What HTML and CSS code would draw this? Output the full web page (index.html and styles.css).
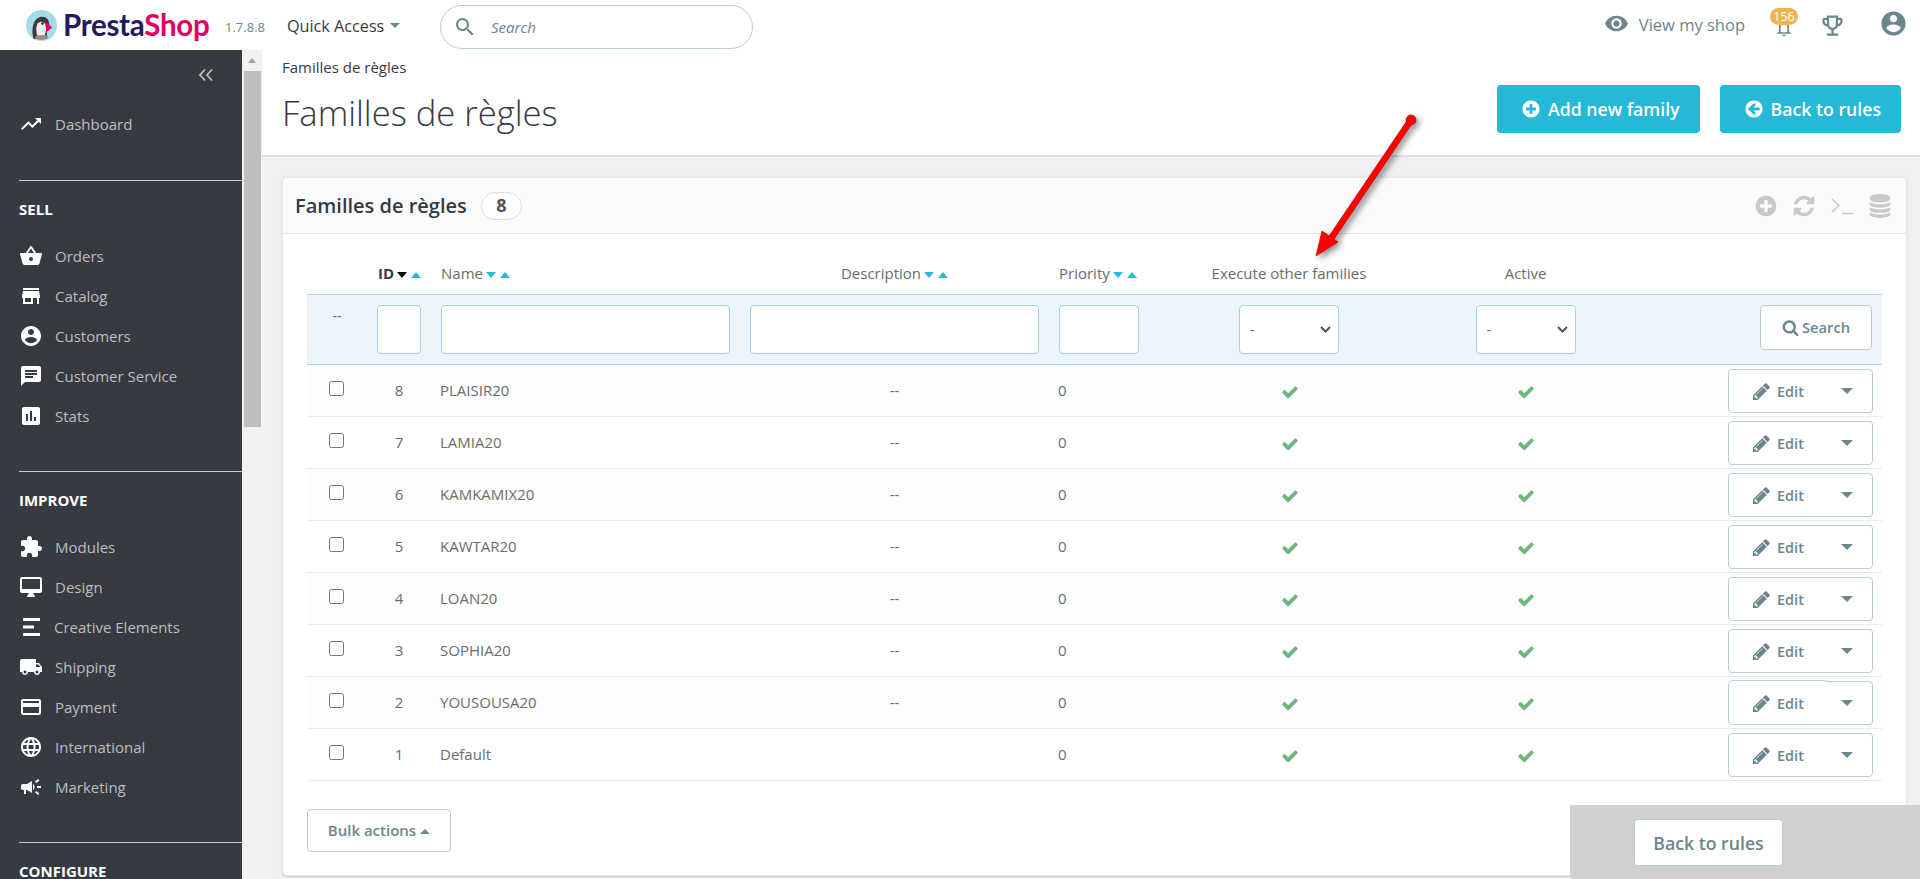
FILE: index.html
```html
<!DOCTYPE html>
<html lang="en">
<head>
<meta charset="utf-8">
<title>Familles de règles</title>
<link rel="stylesheet" href="styles.css">
</head>
<body>
<svg class="sprite" aria-hidden="true">
  <symbol id="i-trend" viewBox="0 0 24 24"><path d="M16 6l2.29 2.29-4.88 4.88-4-4L2 16.59 3.41 18l6-6 4 4 6.3-6.29L22 12V6z"/></symbol>
  <symbol id="i-basket" viewBox="0 0 24 24"><path d="M17.21 9l-4.38-6.56c-.19-.28-.51-.42-.83-.42-.32 0-.64.14-.83.43L6.79 9H2c-.55 0-1 .45-1 1 0 .09.01.18.04.27l2.54 9.27c.23.84 1 1.46 1.92 1.46h13c.92 0 1.69-.62 1.93-1.46l2.54-9.27L23 10c0-.55-.45-1-1-1h-4.79zM9 9l3-4.400L15 9H9zm3 8c-1.100 0-2-.9-2-2s.9-2 2-2 2 .9 2 2-.9 2-2 2z"/></symbol>
  <symbol id="i-store" viewBox="0 0 24 24"><path d="M20 4H4v2h16V4zm1 10v-2l-1-5H4l-1 5v2h1v6h10v-6h4v6h2v-6h1zm-9 4H6v-4h6v4z"/></symbol>
  <symbol id="i-account" viewBox="0 0 24 24"><path d="M12 2C6.48 2 2 6.48 2 12s4.48 10 10 10 10-4.48 10-10S17.52 2 12 2zm0 3c1.66 0 3 1.34 3 3s-1.34 3-3 3-3-1.34-3-3 1.34-3 3-3zm0 14.2c-2.5 0-4.71-1.28-6-3.22.03-1.99 4-3.08 6-3.08 1.99 0 5.97 1.09 6 3.08-1.29 1.94-3.5 3.22-6 3.22z"/></symbol>
  <symbol id="i-chat" viewBox="0 0 24 24"><path d="M20 2H4c-1.100 0-1.990.9-1.990 2L2 22l4-4h14c1.100 0 2-.9 2-2V4c0-1.100-.9-2-2-2zM6 9h12v2H6V9zm8 5H6v-2h8v2zm4-6H6V6h12v2z"/></symbol>
  <symbol id="i-stats" viewBox="0 0 24 24"><path d="M19 3H5c-1.100 0-2 .9-2 2v14c0 1.100.9 2 2 2h14c1.100 0 2-.9 2-2V5c0-1.100-.9-2-2-2zM9 17H7v-7h2v7zm4 0h-2V7h2v10zm4 0h-2v-4h2v4z"/></symbol>
  <symbol id="i-puzzle" viewBox="0 0 24 24"><path d="M20.500 11H19V7c0-1.100-.9-2-2-2h-4V3.500C13 2.120 11.880 1 10.500 1S8 2.120 8 3.500V5H4c-1.100 0-1.990.9-1.990 2v3.800H3.500c1.490 0 2.700 1.210 2.700 2.700s-1.210 2.700-2.700 2.700H2V20c0 1.100.9 2 2 2h3.800v-1.500c0-1.490 1.210-2.700 2.700-2.700 1.490 0 2.700 1.210 2.700 2.700V22H17c1.100 0 2-.9 2-2v-4h1.500c1.380 0 2.500-1.120 2.500-2.500S21.880 11 20.500 11z"/></symbol>
  <symbol id="i-desktop" viewBox="0 0 24 24"><path d="M21 2H3c-1.100 0-2 .9-2 2v12c0 1.100.9 2 2 2h7l-2 3v1h8v-1l-2-3h7c1.100 0 2-.9 2-2V4c0-1.100-.9-2-2-2zm0 12H3V4h18v10z"/></symbol>
  <symbol id="i-elements" viewBox="0 0 24 24"><path d="M4 3h17v3H4zM4 10.500h11v3H4zM4 18h17v3H4z"/></symbol>
  <symbol id="i-truck" viewBox="0 0 24 24"><path d="M20 8h-3V4H3c-1.100 0-2 .9-2 2v11h2c0 1.660 1.340 3 3 3s3-1.340 3-3h6c0 1.660 1.340 3 3 3s3-1.340 3-3h2v-5l-3-4zM6 18.500c-.83 0-1.500-.67-1.500-1.500s.67-1.500 1.500-1.500 1.500.67 1.500 1.500-.67 1.500-1.500 1.500zm13.500-9l1.960 2.500H17V9.500h2.500zm-1.500 9c-.83 0-1.500-.67-1.500-1.500s.67-1.500 1.500-1.500 1.500.67 1.500 1.500-.67 1.500-1.500 1.500z"/></symbol>
  <symbol id="i-card" viewBox="0 0 24 24"><path d="M20 4H4c-1.110 0-1.990.89-1.990 2L2 18c0 1.110.89 2 2 2h16c1.110 0 2-.89 2-2V6c0-1.110-.89-2-2-2zm0 14H4v-6h16v6zm0-10H4V6h16v2z"/></symbol>
  <symbol id="i-globe" viewBox="0 0 24 24"><path d="M11.990 2C6.470 2 2 6.480 2 12s4.470 10 9.990 10C17.520 22 22 17.520 22 12S17.520 2 11.990 2zm6.930 6h-2.950c-.32-1.250-.78-2.450-1.380-3.560 1.840.63 3.370 1.910 4.330 3.560zM12 4.040c.83 1.200 1.480 2.530 1.910 3.960h-3.820c.43-1.430 1.080-2.760 1.910-3.960zM4.260 14C4.100 13.360 4 12.690 4 12s.1-1.360.26-2h3.380c-.08.66-.14 1.320-.14 2 0 .68.06 1.340.14 2H4.260zm.82 2h2.950c.32 1.250.78 2.450 1.380 3.560-1.840-.63-3.370-1.900-4.330-3.560zm2.950-8H5.080c.96-1.660 2.490-2.930 4.330-3.560C8.810 5.550 8.350 6.750 8.030 8zM12 19.960c-.83-1.200-1.480-2.530-1.910-3.960h3.820c-.43 1.430-1.080 2.760-1.910 3.960zM14.340 14H9.660c-.09-.66-.16-1.320-.16-2 0-.68.07-1.350.16-2h4.680c.09.65.16 1.320.16 2 0 .68-.07 1.340-.16 2zm.25 5.560c.6-1.110 1.060-2.310 1.380-3.560h2.950c-.96 1.650-2.490 2.930-4.330 3.560zM16.360 14c.08-.66.14-1.320.14-2 0-.68-.06-1.340-.14-2h3.380c.16.64.26 1.310.26 2s-.1 1.360-.26 2h-3.380z"/></symbol>
  <symbol id="i-mega" viewBox="0 0 24 24"><path d="M18 11v2h4v-2h-4zm-2 6.610c.96.71 2.210 1.650 3.200 2.390.4-.53.8-1.070 1.200-1.600-.99-.74-2.240-1.680-3.200-2.400-.4.54-.8 1.080-1.200 1.610zM20.400 5.600c-.4-.53-.8-1.070-1.200-1.600-.99.74-2.240 1.680-3.200 2.400.4.53.8 1.070 1.200 1.600.96-.72 2.210-1.650 3.200-2.400zM4 9c-1.100 0-2 .9-2 2v2c0 1.100.9 2 2 2h1v4h2v-4h1l5 3V6L8 9H4zm11.500 3c0-1.330-.58-2.530-1.500-3.350v6.690c.92-.81 1.500-2.010 1.500-3.340z"/></symbol>
  <symbol id="i-eye" viewBox="0 0 24 24"><path d="M12 4.500C7 4.500 2.730 7.610 1 12c1.730 4.390 6 7.500 11 7.500s9.270-3.110 11-7.500c-1.730-4.390-6-7.500-11-7.500zM12 17c-2.760 0-5-2.240-5-5s2.240-5 5-5 5 2.240 5 5-2.240 5-5 5zm0-8c-1.660 0-3 1.340-3 3s1.340 3 3 3 3-1.340 3-3-1.340-3-3-3z"/></symbol>
  <symbol id="i-bell" viewBox="0 0 24 24"><path d="M12 22c1.100 0 2-.9 2-2h-4c0 1.100.9 2 2 2zm6-6v-5c0-3.070-1.630-5.640-4.500-6.320V4c0-.83-.67-1.500-1.500-1.500s-1.500.67-1.500 1.500v.68C7.640 5.360 6 7.920 6 11v5l-2 2v1h16v-1l-2-2zm-2 1H8v-6c0-2.480 1.510-4.500 4-4.500s4 2.020 4 4.500v6z"/></symbol>
  <symbol id="i-trophy" viewBox="0 0 24 24"><path d="M19 5h-2V3H7v2H5c-1.100 0-2 .9-2 2v1c0 2.550 1.920 4.630 4.390 4.940.63 1.500 1.980 2.630 3.610 2.960V19H7v2h10v-2h-4v-3.100c1.630-.33 2.980-1.460 3.610-2.960C19.080 12.630 21 10.550 21 8V7c0-1.100-.9-2-2-2zM5 8V7h2v3.820C5.840 10.400 5 9.300 5 8zm7 6c-1.650 0-3-1.350-3-3V5h6v6c0 1.650-1.350 3-3 3zm7-6c0 1.300-.84 2.400-2 2.820V7h2v1z"/></symbol>
  <symbol id="i-search" viewBox="0 0 24 24"><path d="M15.500 14h-.79l-.28-.27C15.410 12.590 16 11.110 16 9.500 16 5.910 13.090 3 9.500 3S3 5.910 3 9.500 5.910 16 9.500 16c1.610 0 3.090-.59 4.230-1.570l.27.28v.79l5 4.990L20.490 19l-4.990-5zm-6 0C7.010 14 5 11.990 5 9.500S7.010 5 9.500 5 14 7.010 14 9.500 11.990 14 9.500 14z"/></symbol>
  <symbol id="fa-search" viewBox="0 0 1792 1792"><path d="M1216 832q0-185-131.500-316.500t-316.500-131.500-316.500 131.500-131.500 316.500 131.500 316.500 316.500 131.500 316.500-131.500 131.500-316.500zm512 832q0 52-38 90t-90 38q-54 0-90-38l-343-342q-179 124-399 124-143 0-273.500-55.500t-225-150-150-225-55.500-273.500 55.500-273.500 150-225 225-150 273.500-55.500 273.500 55.500 225 150 150 225 55.500 273.500q0 220-124 399l343 343q37 37 37 90z"/></symbol>
  <symbol id="fa-plus" viewBox="0 0 1792 1792"><path d="M1344 960v-128q0-26-19-45t-45-19h-256v-256q0-26-19-45t-45-19h-128q-26 0-45 19t-19 45v256h-256q-26 0-45 19t-19 45v128q0 26 19 45t45 19h256v256q0 26 19 45t45 19h128q26 0 45-19t19-45v-256h256q26 0 45-19t19-45zm320-64q0 209-103 385.500t-279.500 279.500-385.500 103-385.500-103-279.500-279.500-103-385.500 103-385.500 279.500-279.500 385.500-103 385.500 103 279.500 279.500 103 385.500z"/></symbol>
  <symbol id="fa-left" viewBox="0 0 1792 1792"><path d="M1408 960v-128q0-26-18.500-45t-45.500-19h-502l189-189q19-19 19-45t-19-45l-91-91q-18-18-45-18t-45 18l-362 362-91 91q-18 18-18 45t18 45l91 91 362 362q18 18 45 18t45-18l91-91q18-18 18-45t-18-45l-189-189h502q27 0 45.500-19t18.500-45zm256-64q0 209-103 385.500t-279.500 279.500-385.500 103-385.500-103-279.500-279.500-103-385.500 103-385.500 279.500-279.500 385.500-103 385.500 103 279.500 279.500 103 385.500z"/></symbol>
  <symbol id="fa-refresh" viewBox="0 0 1792 1792"><path d="M1639 1056q0 5-1 7-64 268-268 434.500t-478 166.500q-146 0-282.500-55t-243.500-157l-129 129q-19 19-45 19t-45-19-19-45v-448q0-26 19-45t45-19h448q26 0 45 19t19 45-19 45l-137 137q71 66 161 102t187 36q134 0 250-65t186-179q11-17 53-117 8-23 30-23h192q13 0 22.500 9.500t9.500 22.500zm25-800v448q0 26-19 45t-45 19h-448q-26 0-45-19t-19-45 19-45l138-138q-148-137-349-137-134 0-250 65t-186 179q-11 17-53 117-8 23-30 23h-199q-13 0-22.500-9.500t-9.500-22.500v-7q65-268 270-434.500t480-166.500q146 0 284 55.500t245 156.500l130-129q19-19 45-19t45 19 19 45z"/></symbol>
  <symbol id="fa-db" viewBox="0 0 1792 1792"><path d="M896 768q237 0 443-43t325-127v170q0 69-103 128t-280 93.500-385 34.500-385-34.500-280-93.500-103-128v-170q119 84 325 127t443 43zm0 768q237 0 443-43t325-127v170q0 69-103 128t-280 93.500-385 34.500-385-34.500-280-93.500-103-128v-170q119 84 325 127t443 43zm0-384q237 0 443-43t325-127v170q0 69-103 128t-280 93.500-385 34.500-385-34.500-280-93.500-103-128v-170q119 84 325 127t443 43zm0-1152q208 0 385 34.500t280 93.500 103 128v128q0 69-103 128t-280 93.500-385 34.500-385-34.500-280-93.500-103-128v-128q0-69 103-128t280-93.500 385-34.500z"/></symbol>
  <symbol id="fa-check" viewBox="0 0 1792 1792"><path d="M1671 566q0 40-28 68l-724 724-136 136q-28 28-68 28t-68-28l-136-136-362-362q-28-28-28-68t28-68l136-136q28-28 68-28t68 28l294 295 656-657q28-28 68-28t68 28l136 136q28 28 28 68z"/></symbol>
  <symbol id="fa-pencil" viewBox="0 0 1536 1536"><path d="M363 1408l91-91-235-235-91 91v107h128v128h107zm523-928q0-22-22-22-10 0-17 7l-542 542q-7 7-7 17 0 22 22 22 10 0 17-7l542-542q7-7 7-17zm-54-192l416 416-832 832h-416v-416zm683 96q0 53-37 90l-166 166-416-416 166-165q36-38 90-38 53 0 91 38l235 234q37 39 37 91z"/></symbol>
</svg>

<header class="topbar">
  <div class="logo">
    <svg class="logo-mark" viewBox="0 0 32 32" aria-hidden="true">
      <circle cx="16" cy="16" r="16" fill="#a5dbe8"/>
      <path d="M8 30C5 21 7 9 15 7c6-1 9 3 9 8l-3 3 1 12z" fill="#3d3a3f"/>
      <path d="M12 14c3-3 7-2 8 1l1 5-2 7-6 2c-3-5-3-11-1-15z" fill="#f1eee9"/>
      <circle cx="17" cy="14" r="1.300" fill="#222"/>
      <path d="M20 11l7 7-6 5z" fill="#df0067"/>
      <path d="M9 29c3 2 9 3 14 0l-1-3H11z" fill="#9b8a76"/>
    </svg>
    <span class="logo-text"><span class="logo-presta">Presta</span><span class="logo-shop">Shop</span></span>
  </div>
  <span class="version">1.7.8.8</span>
  <span class="quick">Quick Access<span class="caret-down"></span></span>
  <label class="searchbox">
    <svg class="searchbox-icon"><use href="#i-search"/></svg>
    <span class="searchbox-text">Search</span>
  </label>
  <div class="top-right">
    <svg class="view-eye"><use href="#i-eye"/></svg>
    <span class="view-text">View my shop</span>
    <span class="bell">
      <svg class="bell-icon"><use href="#i-bell"/></svg>
      <span class="bell-badge">156</span>
    </span>
    <svg class="trophy"><use href="#i-trophy"/></svg>
    <svg class="user"><use href="#i-account"/></svg>
  </div>
</header>

<div class="shell">
  <nav class="sidebar">
    <div class="collapse">
      <svg class="collapse-icon" viewBox="0 0 16 14" aria-hidden="true"><path d="M7 1.500L2 7l5 5.500M14 1.500L9 7l5 5.500"/></svg>
    </div>
    <a class="nav-item"><svg class="nav-icon"><use href="#i-trend"/></svg>Dashboard</a>
    <section class="nav-section">
      <h3 class="nav-title">SELL</h3>
      <a class="nav-item"><svg class="nav-icon"><use href="#i-basket"/></svg>Orders</a>
      <a class="nav-item"><svg class="nav-icon"><use href="#i-store"/></svg>Catalog</a>
      <a class="nav-item"><svg class="nav-icon"><use href="#i-account"/></svg>Customers</a>
      <a class="nav-item"><svg class="nav-icon"><use href="#i-chat"/></svg>Customer Service</a>
      <a class="nav-item"><svg class="nav-icon"><use href="#i-stats"/></svg>Stats</a>
    </section>
    <section class="nav-section">
      <h3 class="nav-title">IMPROVE</h3>
      <a class="nav-item"><svg class="nav-icon"><use href="#i-puzzle"/></svg>Modules</a>
      <a class="nav-item"><svg class="nav-icon"><use href="#i-desktop"/></svg>Design</a>
      <a class="nav-item nav-item-tight"><svg class="nav-icon"><use href="#i-elements"/></svg>Creative Elements</a>
      <a class="nav-item"><svg class="nav-icon"><use href="#i-truck"/></svg>Shipping</a>
      <a class="nav-item"><svg class="nav-icon"><use href="#i-card"/></svg>Payment</a>
      <a class="nav-item"><svg class="nav-icon"><use href="#i-globe"/></svg>International</a>
      <a class="nav-item"><svg class="nav-icon"><use href="#i-mega"/></svg>Marketing</a>
    </section>
    <section class="nav-section">
      <h3 class="nav-title nav-title-last">CONFIGURE</h3>
    </section>
  </nav>
  <div class="scrollbar">
    <span class="scroll-arrow"></span>
    <span class="scroll-thumb"></span>
  </div>

  <main class="main">
    <div class="toolbar">
      <div class="toolbar-left">
        <div class="breadcrumb">Familles de règles</div>
        <h1 class="page-title">Familles de règles</h1>
      </div>
      <div class="toolbar-actions">
        <a class="btn-primary"><svg class="btn-icon"><use href="#fa-plus"/></svg>Add new family</a>
        <a class="btn-primary"><svg class="btn-icon"><use href="#fa-left"/></svg>Back to rules</a>
      </div>
    </div>

    <section class="card">
      <div class="card-head">
        <span class="card-title">Familles de règles</span>
        <span class="card-badge">8</span>
        <div class="card-tools">
          <svg class="tool"><use href="#fa-plus"/></svg>
          <svg class="tool"><use href="#fa-refresh"/></svg>
          <svg class="tool tool-term" viewBox="0 0 24 24" aria-hidden="true"><path d="M2 5l7 6.500L2 18M12 19.500h11"/></svg>
          <svg class="tool"><use href="#fa-db"/></svg>
        </div>
      </div>
      <div class="card-body">
        <table class="grid">
          <colgroup>
            <col class="c-check"><col class="c-id"><col class="c-name"><col class="c-desc"><col class="c-prio"><col class="c-exec"><col class="c-active"><col class="c-act">
          </colgroup>
          <thead>
            <tr class="head-row">
              <th></th>
              <th class="th-id"><b>ID</b><span class="sorts"><i class="s-down s-dark"></i><i class="s-up"></i></span></th>
              <th class="th-left">Name<span class="sorts"><i class="s-down"></i><i class="s-up"></i></span></th>
              <th>Description<span class="sorts"><i class="s-down"></i><i class="s-up"></i></span></th>
              <th class="th-left th-prio">Priority<span class="sorts"><i class="s-down"></i><i class="s-up"></i></span></th>
              <th>Execute other families</th>
              <th>Active</th>
              <th></th>
            </tr>
            <tr class="filter-row">
              <th class="filter-dash">--</th>
              <th class="f-cell"><input class="f-input" type="text" aria-label="ID"></th>
              <th class="f-cell"><input class="f-input" type="text" aria-label="Name"></th>
              <th class="f-cell"><input class="f-input" type="text" aria-label="Description"></th>
              <th class="f-cell"><input class="f-input" type="text" aria-label="Priority"></th>
              <th class="f-cell f-center"><select class="f-select" aria-label="Execute other families"><option>-</option></select></th>
              <th class="f-cell f-center"><select class="f-select" aria-label="Active"><option>-</option></select></th>
              <th class="f-cell f-right"><a class="btn-search"><svg class="btn-search-icon"><use href="#fa-search"/></svg>Search</a></th>
            </tr>
          </thead>
          <tbody>
            <tr class="row odd"><td class="td-check"><input type="checkbox" class="cb" aria-label="Select 8"></td><td class="td-id">8</td><td>PLAISIR20</td><td class="td-center">--</td><td class="td-prio">0</td><td class="td-center"><svg class="ok"><use href="#fa-check"/></svg></td><td class="td-center"><svg class="ok"><use href="#fa-check"/></svg></td><td class="td-act"><a class="btn-edit"><span class="edit-main"><svg class="edit-icon"><use href="#fa-pencil"/></svg>Edit</span><span class="caret-edit"></span></a></td></tr>
            <tr class="row"><td class="td-check"><input type="checkbox" class="cb" aria-label="Select 7"></td><td class="td-id">7</td><td>LAMIA20</td><td class="td-center">--</td><td class="td-prio">0</td><td class="td-center"><svg class="ok"><use href="#fa-check"/></svg></td><td class="td-center"><svg class="ok"><use href="#fa-check"/></svg></td><td class="td-act"><a class="btn-edit"><span class="edit-main"><svg class="edit-icon"><use href="#fa-pencil"/></svg>Edit</span><span class="caret-edit"></span></a></td></tr>
            <tr class="row odd"><td class="td-check"><input type="checkbox" class="cb" aria-label="Select 6"></td><td class="td-id">6</td><td>KAMKAMIX20</td><td class="td-center">--</td><td class="td-prio">0</td><td class="td-center"><svg class="ok"><use href="#fa-check"/></svg></td><td class="td-center"><svg class="ok"><use href="#fa-check"/></svg></td><td class="td-act"><a class="btn-edit"><span class="edit-main"><svg class="edit-icon"><use href="#fa-pencil"/></svg>Edit</span><span class="caret-edit"></span></a></td></tr>
            <tr class="row"><td class="td-check"><input type="checkbox" class="cb" aria-label="Select 5"></td><td class="td-id">5</td><td>KAWTAR20</td><td class="td-center">--</td><td class="td-prio">0</td><td class="td-center"><svg class="ok"><use href="#fa-check"/></svg></td><td class="td-center"><svg class="ok"><use href="#fa-check"/></svg></td><td class="td-act"><a class="btn-edit"><span class="edit-main"><svg class="edit-icon"><use href="#fa-pencil"/></svg>Edit</span><span class="caret-edit"></span></a></td></tr>
            <tr class="row odd"><td class="td-check"><input type="checkbox" class="cb" aria-label="Select 4"></td><td class="td-id">4</td><td>LOAN20</td><td class="td-center">--</td><td class="td-prio">0</td><td class="td-center"><svg class="ok"><use href="#fa-check"/></svg></td><td class="td-center"><svg class="ok"><use href="#fa-check"/></svg></td><td class="td-act"><a class="btn-edit"><span class="edit-main"><svg class="edit-icon"><use href="#fa-pencil"/></svg>Edit</span><span class="caret-edit"></span></a></td></tr>
            <tr class="row"><td class="td-check"><input type="checkbox" class="cb" aria-label="Select 3"></td><td class="td-id">3</td><td>SOPHIA20</td><td class="td-center">--</td><td class="td-prio">0</td><td class="td-center"><svg class="ok"><use href="#fa-check"/></svg></td><td class="td-center"><svg class="ok"><use href="#fa-check"/></svg></td><td class="td-act"><a class="btn-edit"><span class="edit-main"><svg class="edit-icon"><use href="#fa-pencil"/></svg>Edit</span><span class="caret-edit"></span></a></td></tr>
            <tr class="row odd"><td class="td-check"><input type="checkbox" class="cb" aria-label="Select 2"></td><td class="td-id">2</td><td>YOUSOUSA20</td><td class="td-center">--</td><td class="td-prio">0</td><td class="td-center"><svg class="ok"><use href="#fa-check"/></svg></td><td class="td-center"><svg class="ok"><use href="#fa-check"/></svg></td><td class="td-act"><a class="btn-edit btn-edit-raised"><span class="edit-main"><svg class="edit-icon"><use href="#fa-pencil"/></svg>Edit</span><span class="caret-edit"></span></a></td></tr>
            <tr class="row"><td class="td-check"><input type="checkbox" class="cb" aria-label="Select 1"></td><td class="td-id">1</td><td>Default</td><td class="td-center"></td><td class="td-prio">0</td><td class="td-center"><svg class="ok"><use href="#fa-check"/></svg></td><td class="td-center"><svg class="ok"><use href="#fa-check"/></svg></td><td class="td-act"><a class="btn-edit"><span class="edit-main"><svg class="edit-icon"><use href="#fa-pencil"/></svg>Edit</span><span class="caret-edit"></span></a></td></tr>
          </tbody>
        </table>
        <a class="btn-bulk">Bulk actions<span class="caret-up"></span></a>
      </div>
    </section>
  </main>
</div>

<div class="sticky-footer"><a class="btn-footer">Back to rules</a></div>

<svg class="arrow" viewBox="0 0 120 160" aria-hidden="true">
  <g class="arrow-g">
    <path d="M105 20L24 140" class="arrow-edge"/>
    <path d="M105 20L24 140" class="arrow-shaft"/>
    <circle cx="105" cy="20" r="5" class="arrow-fill"/>
    <path d="M10 156L16 131L32 142Z" class="arrow-fill"/>
  </g>
</svg>
</body>
</html>
```

FILE: styles.css
```css
* { box-sizing: border-box; }
html, body { margin: 0; height: 879px; overflow: hidden; }
body {
  position: relative;
  font-family: "Open Sans", "Liberation Sans", sans-serif;
  font-size: 15px;
  color: #363a41;
  background: #eff1f2;
  display: flex;
  flex-direction: column;
}
.sprite { display: none; }
h1, h3 { margin: 0; }
a { text-decoration: none; }

/* Top bar */
.topbar {
  height: 50px;
  flex: none;
  background: #fff;
  display: flex;
  align-items: center;
  padding-left: 26px;
}
.logo { display: flex; align-items: center; width: 199px; }
.logo-mark { width: 31px; height: 31px; flex: none; }
.logo-text { margin-left: 6px; font-family: "Lato", sans-serif; font-weight: 700; font-size: 29.500px; line-height: 32px; letter-spacing: -0.3px; }
.logo-presta { color: #251b5b; }
.logo-shop { color: #df0067; }
.version { font-size: 13px; color: #6c868e; width: 62px; margin-top: 3px; }
.quick { font-size: 16.200px; color: #363a41; width: 153px; display: flex; align-items: center; margin-top: 1px; }
.caret-down { width: 0; height: 0; border: 5px solid transparent; border-top-color: #6c868e; border-bottom-width: 0; margin-left: 6px; }
.searchbox {
  width: 313px; height: 44px; margin-top: 3px;
  border: 1px solid #bbcdd2; border-radius: 22px;
  display: flex; align-items: center; padding-left: 12px;
}
.searchbox-icon { width: 24px; height: 24px; fill: #6c868e; }
.searchbox-text { font-size: 15px; font-style: italic; color: #6c868e; margin-left: 14px; }
.top-right { margin-left: auto; display: flex; align-items: center; height: 50px; padding-right: 12px; }
.view-eye { width: 25px; height: 25px; fill: #6c868e; margin-top: -3px; }
.view-text { font-size: 16.500px; color: #6c868e; margin-left: 10px; margin-top: -2px; }
.bell { position: relative; width: 28px; height: 50px; margin-left: 25px; }
.bell-icon { position: absolute; left: 3px; top: 18px; width: 22px; height: 20px; fill: #6c868e; }
.bell-badge {
  position: absolute; left: 0; top: 8px; width: 28px; height: 17px;
  background: #ecb54f; color: #fff; border-radius: 9px;
  font-size: 12.500px; line-height: 17px; text-align: center;
}
.trophy { width: 27px; height: 27px; fill: #6c868e; margin-left: 21px; margin-top: 1px; }
.user { width: 29px; height: 29px; fill: #6c868e; margin-left: 33px; margin-top: -3px; }

/* Shell */
.shell { flex: 1; display: flex; min-height: 0; }
.sidebar {
  width: 242px; flex: none;
  background: #363a41;
  overflow: hidden;
  color: #bebebe;
}
.collapse { height: 54px; display: flex; justify-content: flex-end; padding: 18px 28px 0 0; }
.collapse-icon { width: 16px; height: 14px; fill: none; stroke: #bebebe; stroke-width: 1.8; }
.nav-item { display: flex; align-items: center; height: 40px; color: #bebebe; font-size: 15px; padding-left: 55px; position: relative; }
.nav-item-tight { padding-left: 54px; }
.nav-icon { position: absolute; left: 19px; top: 8px; width: 24px; height: 24px; fill: #fff; }
.nav-section { margin: 36px 0 0 19px; border-top: 1px solid #bbcdd2; }
.nav-section .nav-item { margin-left: -19px; }
.nav-section + .nav-section { margin-top: 35px; }
.nav-title { height: 55px; font-size: 15px; font-weight: 700; color: #fff; line-height: 56px; }
.nav-title-last { height: auto; line-height: 16px; padding-top: 20px; }

.scrollbar { width: 20px; flex: none; background: #f1f1f1; position: relative; padding: 21px 1px 0 2px; }
.scroll-arrow { position: absolute; left: 6px; top: 8px; width: 0; height: 0; border: 4px solid transparent; border-bottom: 5px solid #a3a3a3; border-top-width: 0; }
.scroll-thumb { display: block; height: 356px; background: #bebebe; }

/* Main */
.main { flex: 1; min-width: 0; display: flex; flex-direction: column; }
.toolbar {
  height: 107px; flex: none;
  background: #fff;
  border-bottom: 2px solid #dfe1e3;
  display: flex; justify-content: space-between;
  padding: 0 19px 0 20px;
}
.breadcrumb { font-size: 15px; line-height: 18px; margin-top: 8px; color: #363a41; }
.page-title { font-size: 34.600px; font-weight: 300; line-height: 44px; margin-top: 15px; color: #363a41; }
.toolbar-actions { display: flex; gap: 20px; padding-top: 35px; }
.btn-primary {
  height: 48px; display: flex; align-items: center;
  background: #25b9d7; color: #fff; font-weight: 600; font-size: 17.700px;
  border-radius: 4px; padding: 0 20px 0 24px;
}
.btn-icon { width: 20px; height: 20px; fill: #fff; margin-right: 7px; }

.card {
  margin: 20px 13px 0 20px;
  height: 699px;
  background: #fff;
  border-radius: 5px;
  box-shadow: 0 0 4px 0 rgba(0, 0, 0, 0.06), 0 1px 1px rgba(187, 205, 210, 0.8);
  border: 1px solid #e3e9ec;
  display: flex; flex-direction: column;
}
.card-head {
  height: 56px; flex: none;
  background: #fafbfc;
  border-bottom: 1px solid #dbe6e9;
  border-radius: 5px 5px 0 0;
  display: flex; align-items: center;
  padding: 0 14px 0 12px;
}
.card-title { font-size: 20px; font-weight: 600; color: #363a41; }
.card-badge {
  width: 41px; height: 28px; margin-left: 14px;
  background: #fff; border: 1px solid #dfdfdf; border-radius: 14px;
  text-align: center; font-size: 18px; line-height: 25px; font-weight: 700; color: #555;
}
.card-tools { margin-left: auto; display: flex; align-items: center; gap: 14px; }
.tool { width: 24px; height: 24px; fill: #c9c9c9; }
.tool-term { fill: none; stroke: #c9c9c9; stroke-width: 1.5; }

.card-body { padding: 20px 24px 0 24px; }
.grid { width: 1575px; border-collapse: collapse; table-layout: fixed; font-size: 15px; color: #6c6c6c; }
.c-check { width: 60px; }
.c-id { width: 64px; }
.c-name { width: 309px; }
.c-desc { width: 309px; }
.c-prio { width: 100px; }
.c-exec { width: 280px; }
.c-active { width: 193px; }
.c-act { width: 260px; }

.head-row th { height: 40px; font-size: 15px; font-weight: 400; color: #6c6c6c; padding: 0 0 1px; text-align: center; border-bottom: 1px solid #a4d8ec; vertical-align: middle; }
.head-row .th-id { text-align: left; padding-left: 11px; color: #363a41; }
.head-row .th-left { text-align: left; padding-left: 10px; }
.head-row .th-prio { padding-left: 10px; }
.th-id b { font-weight: 700; }
.sorts { display: inline-flex; align-items: center; gap: 4px; margin-left: 3px; vertical-align: 1px; }
.s-down { width: 0; height: 0; border: 5.500px solid transparent; border-top: 6px solid #25b9d7; border-bottom-width: 0; }
.s-up { width: 0; height: 0; border: 5.500px solid transparent; border-bottom: 6px solid #25b9d7; border-top-width: 0; }
.s-dark { border-top-color: #000; }

.filter-row th { height: 70px; background: #ebf5fb; border-bottom: 1px solid #a4d8ec; padding: 0; font-weight: 400; }
.filter-dash { vertical-align: top; font-size: 14px; color: #6c6c6c; padding-top: 11px !important; text-align: center; }
.f-cell { padding: 10px 10px 0 !important; vertical-align: top; }
.f-center { text-align: center; }
.f-right { text-align: right; padding: 10px 10px 0 0 !important; }
.f-input { display: block; width: 100%; height: 49px; background: #fff; border: 1px solid #a2d0e6; border-radius: 4px; outline: none; }
.f-select {
  appearance: none;
  width: 100px; height: 49px;
  background: #fff url("data:image/svg+xml,%3Csvg xmlns='http://www.w3.org/2000/svg' viewBox='0 0 11 7'%3E%3Cpath d='M1 1l4.500 4.500L10 1' fill='none' stroke='%23555' stroke-width='2'/%3E%3C/svg%3E") no-repeat right 7px center / 11px 7px;
  border: 1px solid #a2d0e6; border-radius: 4px;
  font-family: inherit; font-size: 14px; color: #6c6c6c; padding-left: 10px;
}
.btn-search {
  display: inline-flex; align-items: center; height: 45px; width: 112px; justify-content: center;
  background: #fff; border: 1px solid #bbcdd2; border-radius: 4px;
  color: #6c868e; font-weight: 600; font-size: 14.700px;
}
.btn-search-icon { width: 17px; height: 17px; fill: #6c868e; margin-right: 3px; }

.row { height: 52px; border-bottom: 1px solid #e7ebee; }
.row.odd { background: #fcfdfe; }
.row td { padding: 0; vertical-align: middle; }
.td-check { vertical-align: top !important; padding-left: 22px !important; padding-top: 16px !important; }
.cb { display: block; width: 15px; height: 15px; margin: 0; }
.td-id { text-align: center; }
.td-prio { padding-left: 9px !important; }
.td-center { text-align: center; }
.row td:nth-child(3) { padding-left: 9px; }
.ok { width: 18px; height: 18px; fill: #70b580; vertical-align: middle; margin: 2px 0 0 1px; }
.td-act { text-align: right; padding-right: 9px !important; }
.btn-edit {
  position: relative;
  display: inline-flex; align-items: center; justify-content: space-between;
  width: 145px; height: 44px; vertical-align: middle; margin-top: 2px;
  background: #fff; border: 1px solid #bbcdd2; border-radius: 4px;
  color: #6c868e; font-weight: 600; font-size: 14.500px; padding: 0 19px 0 24px;
}
.btn-edit-raised::before {
  content: ""; position: absolute; left: 2px; top: -2px; width: 94px; height: 1px; background: #bbcdd2;
}
.btn-edit-raised::after {
  content: ""; position: absolute; left: 2px; top: -1px; width: 94px; height: 1px; background: #fff;
}
.edit-main { display: flex; align-items: center; }
.edit-icon { width: 17px; height: 17px; fill: #6c868e; margin-right: 7px; }
.caret-edit { width: 0; height: 0; border: 6px solid transparent; border-top: 6px solid #6c868e; border-bottom-width: 0; }

.btn-bulk {
  display: inline-flex; align-items: center; justify-content: center;
  width: 144px; height: 43px; margin-top: 28px;
  background: #fff; border: 1px solid #bbcdd2; border-radius: 4px;
  color: #6c868e; font-weight: 600; font-size: 15px;
}
.caret-up { width: 0; height: 0; border: 5px solid transparent; border-bottom: 5px solid #6c868e; border-top-width: 0; margin-left: 4px; margin-top: 3px; }

/* Overlays */
.sticky-footer {
  position: absolute; right: 0; bottom: 0;
  width: 350px; height: 74px;
  background: #d0d0d0; border-radius: 0 0 0 4px;
  padding: 14px 0 0 64px;
}
.btn-footer {
  display: flex; align-items: center; justify-content: center;
  width: 149px; height: 47px;
  background: #fff; border: 1px solid #bbcdd2; border-radius: 4px;
  color: #6c868e; font-weight: 600; font-size: 17.700px;
}
.arrow {
  position: absolute; left: 1306px; top: 100px;
  width: 120px; height: 160px; overflow: visible;
}
.arrow-g { filter: drop-shadow(3px 3px 3px rgba(0, 0, 0, 0.45)); }
.arrow-edge { fill: none; stroke: #c00; stroke-width: 6.500; }
.arrow-shaft { fill: none; stroke: #f00; stroke-width: 5; }
.arrow-fill { fill: #f00; stroke: #c00; stroke-width: 0.7; }
```
